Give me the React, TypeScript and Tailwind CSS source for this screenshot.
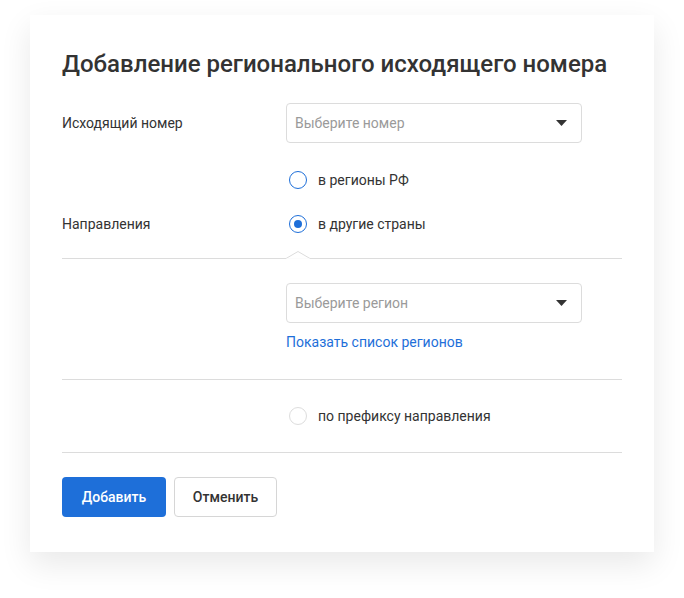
import React, { useState } from 'react';

const font = { fontFamily: 'Roboto, "Noto Sans", sans-serif' };

function Caret() {
  return (
    <svg width="11" height="6" viewBox="0 0 11 6" className="shrink-0">
      <path d="M0 0 H11 L5.5 6 Z" fill="#333" />
    </svg>
  );
}

function Select({ placeholder }: { placeholder: string }) {
  return (
    <div className="flex h-10 w-[296px] items-center justify-between rounded border border-[#dcdcdc] bg-white pl-2 pr-[14px]">
      <span className="text-sm text-[#9a9a9a]">{placeholder}</span>
      <Caret />
    </div>
  );
}

function Radio({
  checked,
  disabled,
  label,
  onClick,
}: {
  checked?: boolean;
  disabled?: boolean;
  label: string;
  onClick?: () => void;
}) {
  return (
    <button type="button" onClick={onClick} className="flex items-center gap-[11px] text-left">
      <span
        className={
          'ml-[3px] flex h-[18px] w-[18px] items-center justify-center rounded-full border ' +
          (disabled ? 'border-[#dddddd]' : 'border-[#1e6fd9]')
        }
      >
        {checked && <span className="h-2 w-2 rounded-full bg-[#1e6fd9]" />}
      </span>
      <span className="text-sm text-[#333]">{label}</span>
    </button>
  );
}

function Divider({ notch }: { notch?: boolean }) {
  return (
    <div className="relative h-px bg-[#dcdcdc]">
      {notch && (
        <svg
          width="24"
          height="8"
          viewBox="0 0 24 8"
          className="absolute left-[224px] top-[-7px]"
        >
          <path d="M0 7.5 L12 0.5 L24 7.5" fill="#fff" stroke="#dcdcdc" strokeWidth="1" />
          <rect x="0.5" y="7.2" width="23" height="1" fill="#fff" />
        </svg>
      )}
    </div>
  );
}

export default function App() {
  const [dir, setDir] = useState<'ru' | 'world'>('world');

  return (
    <div className="min-h-screen bg-white px-[30px] pb-[46px] pt-[15px]" style={font}>
      <div className="bg-white px-8 pb-[35px] pt-[33px] shadow-[0_12px_30px_rgba(0,0,0,0.09)]">
        <h1 className="text-[24px] font-medium leading-8 text-[#333]">
          Добавление регионального исходящего номера
        </h1>

        <div className="mt-[23px] grid grid-cols-[224px_1fr] items-center">
          <span className="text-sm text-[#333]">Исходящий номер</span>
          <Select placeholder="Выберите номер" />
        </div>

        <div className="mt-[27px] grid grid-cols-[224px_1fr] gap-y-[24px]">
          <span />
          <Radio label="в регионы РФ" checked={dir === 'ru'} onClick={() => setDir('ru')} />
          <span className="flex items-center text-sm text-[#333]">Направления</span>
          <Radio label="в другие страны" checked={dir === 'world'} onClick={() => setDir('world')} />
        </div>

        <div className="mt-[24px]">
          <Divider notch />
        </div>

        <div className="mt-[24px] pl-[224px]">
          <Select placeholder="Выберите регион" />
          <a href="#" className="mt-[9px] block text-sm leading-5 text-[#1e6fd9]">
            Показать список регионов
          </a>
        </div>

        <div className="mt-[27px]">
          <Divider />
        </div>

        <div className="mt-[26px] pl-[224px]">
          <Radio label="по префиксу направления" disabled />
        </div>

        <div className="mt-[26px]">
          <Divider />
        </div>

        <div className="mt-[24px] flex gap-2">
          <button className="h-10 w-[104px] rounded bg-[#1e6fd9] text-sm font-medium text-white">
            Добавить
          </button>
          <button className="h-10 w-[103px] rounded border border-[#d6d6d6] bg-white text-sm font-medium text-[#333]">
            Отменить
          </button>
        </div>
      </div>
    </div>
  );
}
